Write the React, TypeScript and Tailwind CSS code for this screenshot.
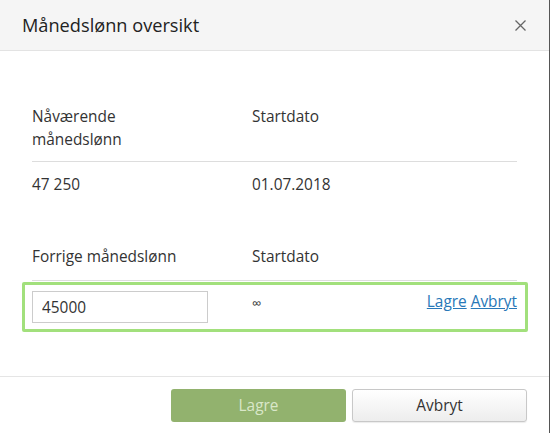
import type { ReactElement } from "react";

export default function App(): ReactElement {
    return (
        <div className="w-[550px] h-[433px] bg-white border-r border-[#555] font-['Open_Sans',sans-serif] text-[#333] text-[15.4px] leading-[23px]">
            {/* HEADER */}
            <div className="h-[51px] bg-[#f5f5f5] border-b border-[#e3e3e3] flex items-center justify-between pl-[22px] pr-[22px]">
                <h1 className="text-[18.2px] text-[#222] leading-[24px]">Månedslønn oversikt</h1>
                <svg width="11" height="11" viewBox="0 0 11 11" className="mr-[1px]">
                    <path d="M0.5 0.5 L10.5 10.5 M10.5 0.5 L0.5 10.5" stroke="#666" strokeWidth="1.3" />
                </svg>
            </div>

            {/* BODY */}
            <div className="pt-[54px] pb-[44px] px-[32px]">
                {/* current */}
                <div className="grid grid-cols-[220px_1fr] border-b border-[#ddd] pb-[10px]">
                    <div className="w-[110px]">Nåværende månedslønn</div>
                    <div>Startdato</div>
                </div>
                <div className="grid grid-cols-[220px_1fr] pt-[11px]">
                    <div>47 250</div>
                    <div>01.07.2018</div>
                </div>

                {/* previous */}
                <div className="grid grid-cols-[220px_1fr] border-b border-[#ddd] pb-[12px] mt-[49px]">
                    <div>Forrige månedslønn</div>
                    <div>Startdato</div>
                </div>
                <div className="-ml-[10px] -mr-[11px] mt-[1px] h-[50px] border-[3px] border-[#a2e07c] rounded-[2px] pl-[7px] pr-[8px] grid grid-cols-[220px_1fr_auto] items-start">
                    <div className="pt-[6px]">
                        <input
                            defaultValue="45000"
                            className="w-[176px] h-[32px] border border-[#ccc] px-[9px] text-[15.4px] text-[#333] outline-none"
                        />
                    </div>
                    <div className="pt-[7px] text-[13px]">∞</div>
                    <div className="pt-[5px] flex gap-[4px] text-[#2878b8]">
                        <a className="underline">Lagre</a>
                        <a className="underline">Avbryt</a>
                    </div>
                </div>
            </div>

            {/* FOOTER */}
            <div className="border-t border-[#e5e5e5] pt-[12px] pr-[22px] flex justify-end gap-[6px]">
                <button className="w-[175px] h-[33px] rounded-[3px] bg-[#92b26e] text-[#d9e7c9] text-[15.4px]">
                    Lagre
                </button>
                <button className="w-[175px] h-[33px] rounded-[3px] border border-[#c8c8c8] bg-gradient-to-b from-white to-[#ededed] text-[#333] text-[15.4px] shadow-[0_1px_1px_rgba(0,0,0,0.08)]">
                    Avbryt
                </button>
            </div>
        </div>
    );
}
